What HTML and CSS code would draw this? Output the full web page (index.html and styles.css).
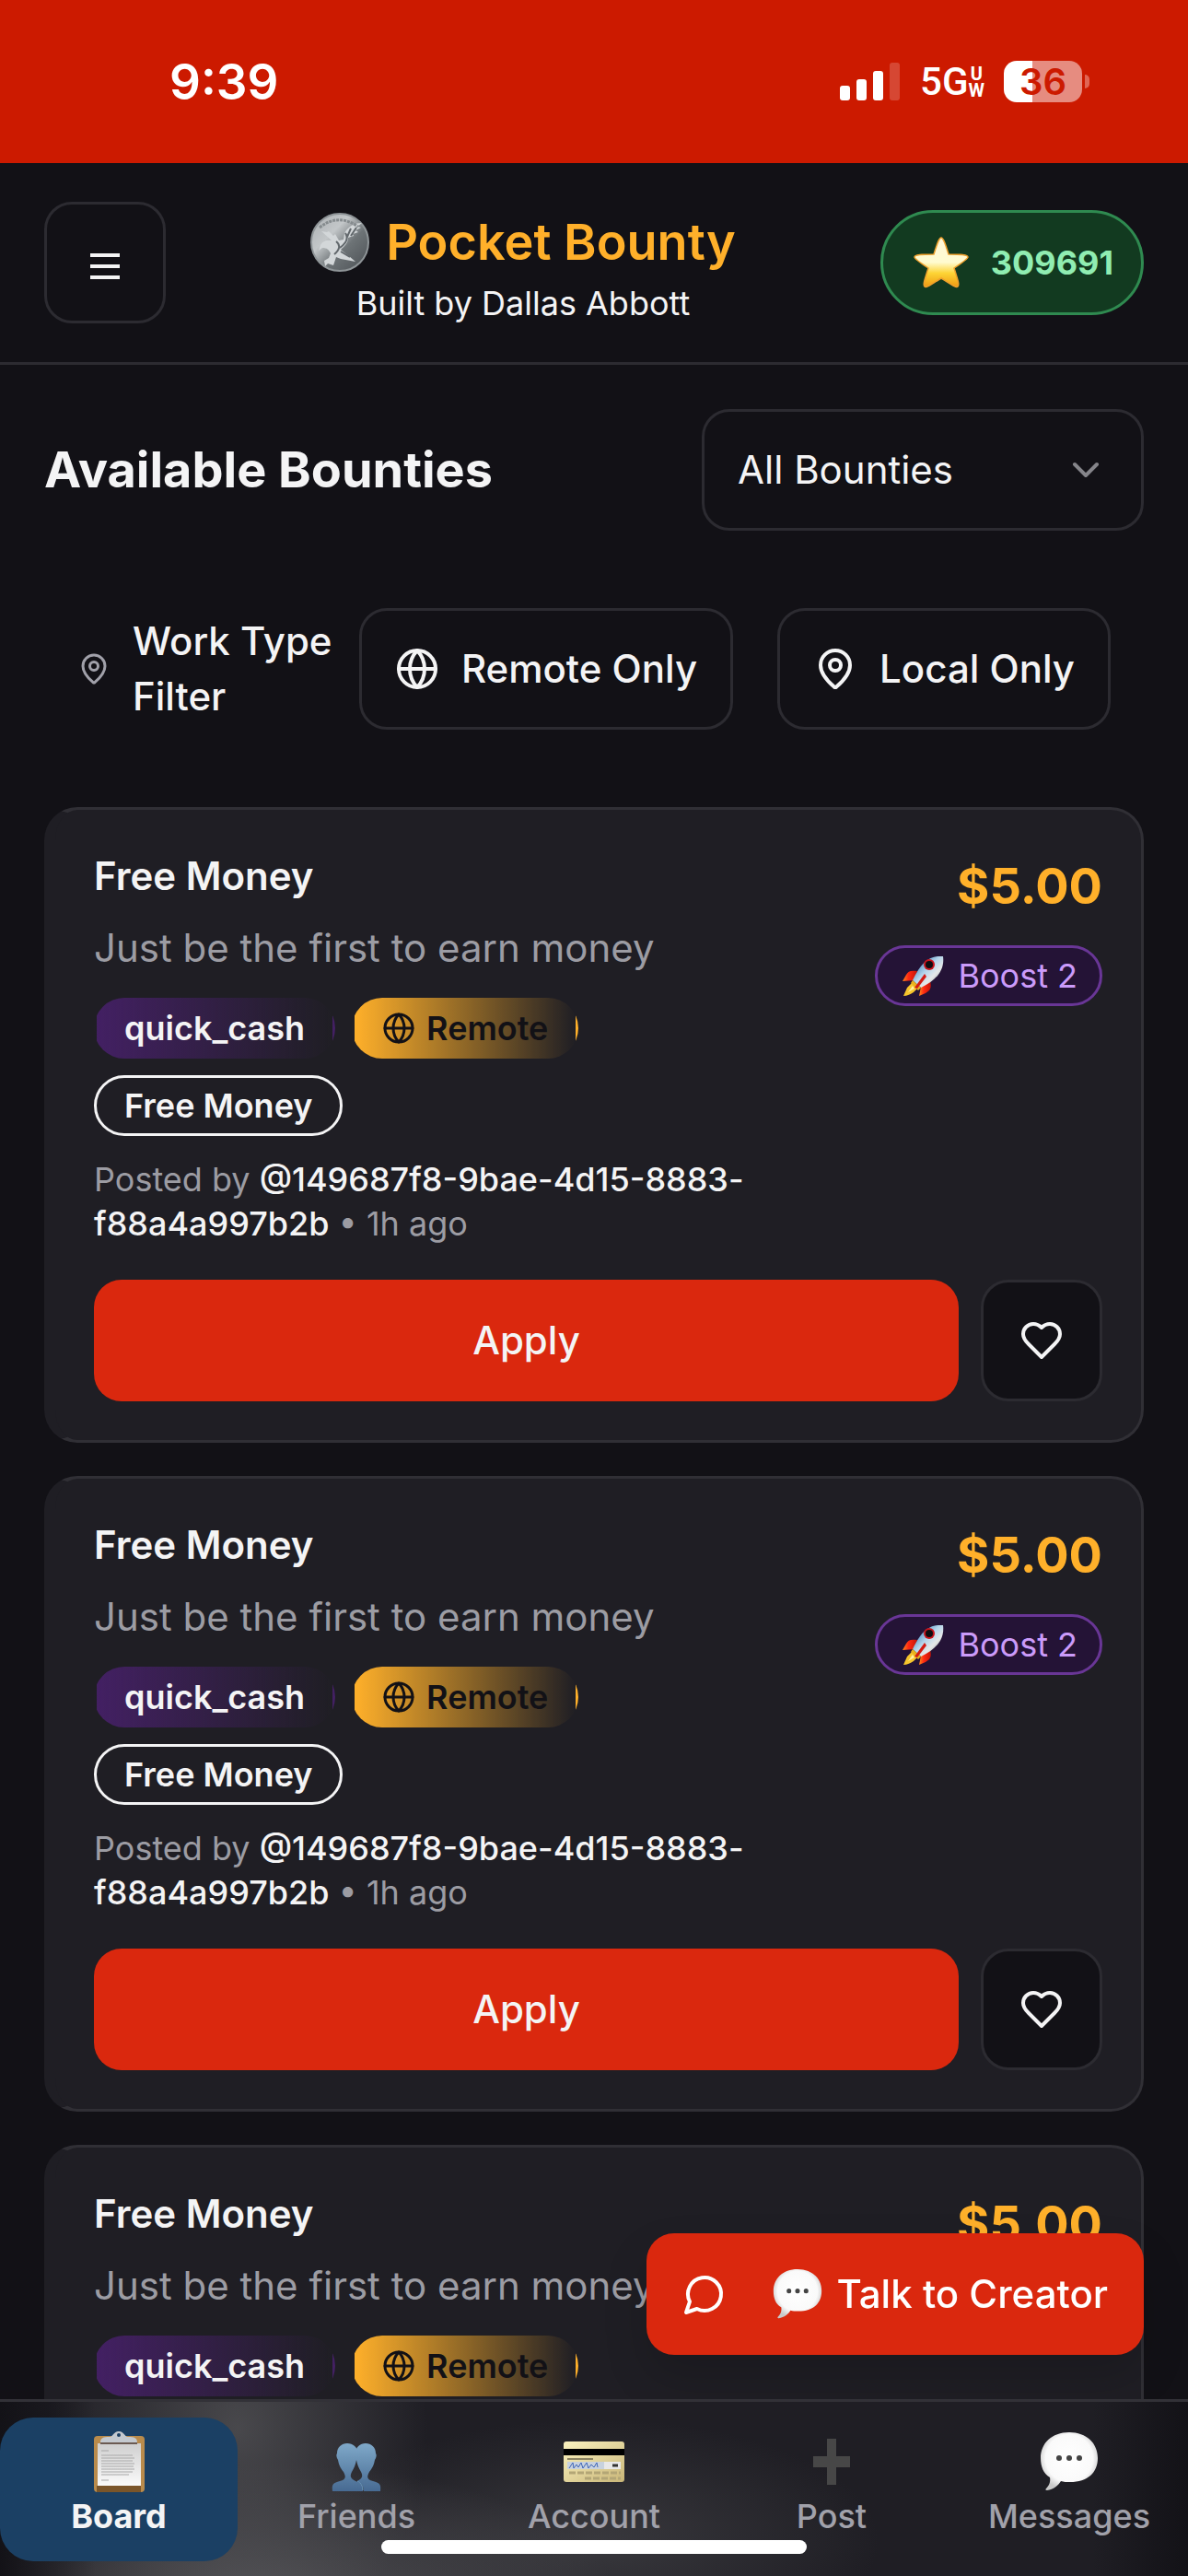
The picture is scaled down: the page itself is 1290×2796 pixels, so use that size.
FILE: index.html
```html
<!DOCTYPE html>
<html lang="en">
<head>
<meta charset="utf-8">
<meta name="viewport" content="width=device-width, initial-scale=1">
<title>Pocket Bounty</title>
<link rel="stylesheet" href="styles.css">
</head>
<body>
<svg class="defs" aria-hidden="true">
  <defs>
    <linearGradient id="g-star" x1="0" y1="0" x2="0" y2="1"><stop offset="0" stop-color="#fff6d8"/><stop offset=".5" stop-color="#fffbd0"/><stop offset=".72" stop-color="#fdd435"/><stop offset="1" stop-color="#ee9a12"/></linearGradient>
    <radialGradient id="g-bubble" cx=".5" cy=".45" r=".55"><stop offset="0" stop-color="#fff"/><stop offset=".75" stop-color="#fafafa"/><stop offset="1" stop-color="#c9c9c9"/></radialGradient>
    <linearGradient id="g-coin" x1="0" y1="0" x2="1" y2="1"><stop offset="0" stop-color="#a9adb0"/><stop offset=".35" stop-color="#c3c7c9"/><stop offset=".6" stop-color="#6d7376"/><stop offset="1" stop-color="#4a4f53"/></linearGradient>
    <linearGradient id="g-people" x1="0" y1="0" x2="0" y2="1"><stop offset="0" stop-color="#7fa9c9"/><stop offset="1" stop-color="#476a92"/></linearGradient>
    <linearGradient id="g-card" x1="0" y1="0" x2="1" y2="1"><stop offset="0" stop-color="#fbf3c0"/><stop offset="1" stop-color="#c9b678"/></linearGradient>
    <linearGradient id="g-paper" x1="0" y1="0" x2="0" y2="1"><stop offset="0" stop-color="#cfcfcf"/><stop offset="1" stop-color="#fafafa"/></linearGradient>
    <linearGradient id="g-rocket" x1="0" y1="0" x2="1" y2="1"><stop offset=".2" stop-color="#4f8fc4"/><stop offset=".45" stop-color="#b4d4ea"/><stop offset=".65" stop-color="#e6e8e8"/><stop offset="1" stop-color="#7d8588"/></linearGradient>
    <linearGradient id="g-fin" x1="0" y1="0" x2="1" y2="0"><stop offset="0" stop-color="#ff8a1c"/><stop offset=".4" stop-color="#ff2a12"/><stop offset="1" stop-color="#c41208"/></linearGradient>
  </defs>
  <symbol id="i-globe" viewBox="0 0 24 24"><circle cx="12" cy="12" r="10"/><path d="M12 2a14.5 14.5 0 0 0 0 20 14.5 14.5 0 0 0 0-20"/><path d="M2 12h20"/></symbol>
  <symbol id="i-pin" viewBox="0 0 24 24"><path d="M20 10c0 4.993-5.539 10.193-7.399 11.799a1 1 0 0 1-1.202 0C9.539 20.193 4 14.993 4 10a8 8 0 0 1 16 0"/><circle cx="12" cy="10" r="3"/></symbol>
  <symbol id="i-heart" viewBox="0 0 24 24"><path d="M19 14c1.490-1.460 3-3.210 3-5.500A5.500 5.500 0 0 0 16.500 3c-1.760 0-3 .500-4.500 2-1.500-1.500-2.740-2-4.500-2A5.500 5.500 0 0 0 2 8.500c0 2.300 1.500 4.050 3 5.500l7 7Z"/></symbol>
  <symbol id="i-chat" viewBox="0 0 24 24"><path d="M7.900 20A9 9 0 1 0 4 16.100L2 22Z"/></symbol>
  <symbol id="i-bubble" viewBox="0 0 64 66"><path d="M32 1C50 1 63 13 63 33c0 20-12 32-31 32-3 0-5 0-8-1-4 1-9 1-16 1Z" fill="none"/><path d="M32 1C51 1 63 13 63 29c0 16-11 26-30 26-4 0-7 0-10-1-3 5-8 9-15 10-2 0-2-1-1-2 3-3 5-7 4-12C4 46 1 38 1 29 1 13 13 1 32 1Z" fill="url(#g-bubble)"/><circle cx="21" cy="29" r="3" fill="#444"/><circle cx="32" cy="29" r="3" fill="#444"/><circle cx="43" cy="29" r="3" fill="#444"/></symbol>
  <symbol id="i-rocket" viewBox="0 0 46 44"><path d="M17 17c-7-1-10 0-12 4L1 28l13-1z" fill="url(#g-fin)"/><path d="M31 28c2 7 0 10-5 13l-7 3 2-10z" fill="url(#g-fin)"/><path d="m11 30-5 5-4 9c4 0 8-2 11-4l5-5z" fill="#f7c52c"/><path d="m12 33-5 7 7-4z" fill="#fff1a0"/><path d="M45 1C31 0 22 6 12 27l9 8C38 27 47 16 45 1Z" fill="url(#g-rocket)"/><circle cx="30" cy="10" r="6" fill="#c8141c"/><circle cx="30" cy="10" r="4" fill="#0d0d10"/><path d="m12 27 9 8-3 3-8-8z" fill="#e8b21e"/><path d="m25 20-11 15 3 1 10-13z" fill="#d31a12"/></symbol>
</svg>

<div class="statusbar">
  <span class="clock">9:39</span>
  <div class="status-icons">
    <svg class="signal" viewBox="0 0 66 42" aria-hidden="true"><rect x="0" y="25" width="11" height="16" rx="3"/><rect x="18" y="18" width="11" height="23" rx="3"/><rect x="36" y="9" width="11" height="32" rx="3"/><rect x="54" y="0" width="11" height="41" rx="3" opacity=".2"/></svg>
    <span class="network">5G<span class="network-sub"><span>U</span><span>W</span></span></span>
    <span class="battery"><span class="battery-body">36</span><span class="battery-cap"></span></span>
  </div>
</div>

<header class="header">
  <button class="menu-btn" aria-label="Menu"><svg viewBox="0 0 32 28"><path d="M0 2h32M0 14h32M0 26h32"/></svg></button>
  <div class="brand">
    <h1 class="brand-title">
      <svg class="coin" viewBox="0 0 64 64" aria-hidden="true"><circle cx="32" cy="32" r="31" fill="url(#g-coin)" stroke="#8f9598" stroke-width="2"/><path d="M11 35c2-4 6-6 12-5l-11-10 6 1 2-1 5 5 2-2 4 7 5-1c1-4 0-6 3-10 4-5 9-8 17-8l-5 4 4 1-6 3 3 2-6 2 1 2-6 2c0 6-4 9-8 13l9 7 7 6-16-3-5-2-3 9-6-2-3 3-1-6 5-3 2-5c-2-4-4-6-9-6l-4 3z" fill="#d3d7d9"/><path d="M28 31c5 4 4 9-2 14M38 22c4 6 1 11-6 16M44 17l-4 9M50 16l-6 9M33 42l10 6" fill="none" stroke="#62686c" stroke-width="2"/><path d="M10 16q20-16 42-1" fill="none" stroke="#858b8e" stroke-width="3" stroke-dasharray="3 1"/></svg>
      Pocket Bounty
    </h1>
    <p class="brand-sub">Built by Dallas Abbott</p>
  </div>
  <button class="points">
    <svg class="star" viewBox="0 0 60 58" aria-hidden="true"><path d="M30 2c2 0 4 5 8 18 13 0 21 0 21 3 0 2-6 6-15 12 4 13 6 18 4 20-2 2-8-3-18-9-10 6-16 11-18 9-2-2 0-7 4-20C7 29 1 25 1 23c0-3 8-3 21-3C26 7 28 2 30 2Z" fill="url(#g-star)" stroke="#efa02c" stroke-width="1.500"/></svg>
    <span>309691</span>
  </button>
</header>

<main class="main">
  <div class="heading-row">
    <h2 class="heading">Available Bounties</h2>
    <div class="select-wrap">
      <select class="select" aria-label="Filter bounties"><option>All Bounties</option></select>
      <svg class="chevron" viewBox="0 0 24 24" aria-hidden="true"><path d="m6 9 6 6 6-6"/></svg>
    </div>
  </div>

  <div class="filters">
    <svg class="icon icon-sm" aria-hidden="true"><use href="#i-pin"/></svg>
    <span class="filters-label">Work Type Filter</span>
    <div class="filters-buttons">
      <button class="btn"><svg class="icon"><use href="#i-globe"/></svg>Remote Only</button>
      <button class="btn"><svg class="icon"><use href="#i-pin"/></svg>Local Only</button>
    </div>
  </div>

  <div class="cards">
    <article class="card">
      <div class="card-top">
        <div class="card-info">
          <h3 class="card-title">Free Money</h3>
          <p class="card-desc">Just be the first to earn money</p>
          <div class="tags">
            <span class="tag tag-purple">quick_cash</span>
            <span class="tag tag-gold"><svg class="icon icon-sm"><use href="#i-globe"/></svg>Remote</span>
            <span class="tag tag-outline">Free Money</span>
          </div>
          <p class="posted">Posted by <b>@149687f8-9bae-4d15-8883-f88a4a997b2b</b> • 1h ago</p>
        </div>
        <div class="card-side">
          <span class="price">$5.00</span>
          <span class="boost"><svg class="rocket"><use href="#i-rocket"/></svg>Boost 2</span>
        </div>
      </div>
      <div class="actions">
        <button class="apply">Apply</button>
        <button class="like" aria-label="Save"><svg class="icon"><use href="#i-heart"/></svg></button>
      </div>
    </article>

    <article class="card">
      <div class="card-top">
        <div class="card-info">
          <h3 class="card-title">Free Money</h3>
          <p class="card-desc">Just be the first to earn money</p>
          <div class="tags">
            <span class="tag tag-purple">quick_cash</span>
            <span class="tag tag-gold"><svg class="icon icon-sm"><use href="#i-globe"/></svg>Remote</span>
            <span class="tag tag-outline">Free Money</span>
          </div>
          <p class="posted">Posted by <b>@149687f8-9bae-4d15-8883-f88a4a997b2b</b> • 1h ago</p>
        </div>
        <div class="card-side">
          <span class="price">$5.00</span>
          <span class="boost"><svg class="rocket"><use href="#i-rocket"/></svg>Boost 2</span>
        </div>
      </div>
      <div class="actions">
        <button class="apply">Apply</button>
        <button class="like" aria-label="Save"><svg class="icon"><use href="#i-heart"/></svg></button>
      </div>
    </article>

    <article class="card card-last">
      <div class="card-top">
        <div class="card-info">
          <h3 class="card-title">Free Money</h3>
          <p class="card-desc">Just be the first to earn money</p>
          <div class="tags">
            <span class="tag tag-purple">quick_cash</span>
            <span class="tag tag-gold"><svg class="icon icon-sm"><use href="#i-globe"/></svg>Remote</span>
          </div>
        </div>
        <div class="card-side">
          <span class="price">$5.00</span>
        </div>
      </div>
    </article>
  </div>
</main>

<button class="fab"><svg class="icon"><use href="#i-chat"/></svg><span class="fab-label"><svg class="fab-bubble"><use href="#i-bubble"/></svg>Talk to Creator</span></button>

<nav class="tabbar">
  <a class="tab tab-active" href="#board">
    <svg class="tab-icon" viewBox="0 0 72 72" aria-hidden="true"><rect x="9" y="8" width="55" height="61" rx="4" fill="#b98b4c"/><path d="M12 62h48v7H12z" fill="#7a552a"/><path d="M13 16h47v46H13z" fill="url(#g-paper)"/><path d="M17 24h8M17 29h34M17 32h36M17 35h34M17 38h36M17 41h35M17 44h36M17 47h34M17 50h30M17 56h8" stroke="#a8a8a8" stroke-width="1"/><path d="M16 15h40v2H16z" fill="#6b5a52"/><path d="M16 15c0-5 3-6 10-6 4 0 4-6 10-6s6 6 10 6c7 0 10 1 10 6z" fill="#c4c9cf"/><circle cx="36" cy="7" r="2" fill="#1c3f63"/></svg>
    <span>Board</span>
  </a>
  <a class="tab" href="#friends">
    <svg class="tab-icon" viewBox="0 0 72 72" aria-hidden="true"><g fill="url(#g-people)"><path d="M10 68c-1-8 1-9 8-11 8-2 6-6 4-10-4-5-5-8-6-13-2-3-2-6-1-7 0-7 5-11 11-11s12 4 11 11c1 1 1 4-1 7-1 5-2 8-5 13-2 4-2 7 4 10 6 2 8 4 8 11z"/><path d="M62 68c1-8-1-9-8-11-8-2-6-6-4-10 4-5 5-8 6-13 2-3 2-6 1-7 0-7-5-11-11-11s-11 4-11 11c-1 1 0 4 1 7 1 5 2 8 5 13 2 4 2 7-4 10 4 2 7 5 7 11z"/></g><path d="M37 57c4 2 6 5 6 10" fill="none" stroke="#6e9cc2" stroke-width="1"/></svg>
    <span>Friends</span>
  </a>
  <a class="tab" href="#account">
    <svg class="tab-icon" viewBox="0 0 72 72" aria-hidden="true"><rect x="3" y="14" width="66" height="44" rx="3" fill="url(#g-card)"/><path d="M3 22h66v7H3z" fill="#000"/><path d="M7 33h28" stroke="#8a8260" stroke-width="2"/><path d="M7 36h40v8H7z" fill="#c8d2de"/><path d="M47 36h18v8H47z" fill="#e8e8e8"/><path d="m9 43 4-6 1 6 3-4 2 3 3-5 2 6 4-6 2 6 3-4 3 3 3-5 1 5" fill="none" stroke="#3f66b8" stroke-width="1"/><path d="M56 40h6" stroke="#333" stroke-width="3"/><path d="M9 48h56M26 54h39" stroke="#b3a676" stroke-width="3" stroke-dasharray="7 2"/></svg>
    <span>Account</span>
  </a>
  <a class="tab" href="#post">
    <svg class="tab-icon" viewBox="0 0 72 72" aria-hidden="true"><path d="M31 11h10v19h15v12H41v19H31V42H16V30h15z" fill="#474747"/></svg>
    <span>Post</span>
  </a>
  <a class="tab" href="#messages">
    <svg class="tab-icon" viewBox="-4 -3 72 72" aria-hidden="true"><use href="#i-bubble" width="64" height="66"/></svg>
    <span>Messages</span>
  </a>
  <div class="home-indicator"></div>
</nav>
</body>
</html>
```
FILE: styles.css
```css
* { box-sizing: border-box; }

html, body { height: 100%; }

body {
  margin: 0;
  display: flex;
  flex-direction: column;
  overflow: hidden;
  background: #121116;
  color: #f4f4f5;
  font-family: Inter, "Liberation Sans", sans-serif;
  font-size: 42px;
  line-height: 60px;
}

h1, h2, h3, p { margin: 0; }

button {
  font: inherit;
  color: inherit;
  margin: 0;
  cursor: pointer;
}

svg { display: block; flex: none; }

.defs { position: absolute; width: 0; height: 0; }

.icon {
  width: 48px;
  height: 48px;
  fill: none;
  stroke: currentColor;
  stroke-width: 2;
  stroke-linecap: round;
  stroke-linejoin: round;
}

.icon-sm { width: 36px; height: 36px; }

/* Status bar */
.statusbar {
  flex: none;
  height: 177px;
  padding: 0 107px 0 184px;
  display: flex;
  align-items: center;
  justify-content: space-between;
  background: #cc1a00;
  color: #fff;
}

.clock { font-size: 53px; font-weight: 600; }

.status-icons { display: flex; align-items: center; gap: 21px; }

.signal { width: 66px; height: 42px; fill: #fff; }

.network {
  display: flex;
  align-items: center;
  font-family: Roboto, Inter, sans-serif;
  font-size: 42px;
  font-weight: 500;
}

.network-sub {
  display: flex;
  flex-direction: column;
  align-items: center;
  font-size: 20px;
  font-weight: 700;
  line-height: 18px;
}

.battery { display: flex; align-items: center; gap: 3px; }

.battery-body {
  width: 85px;
  height: 45px;
  border-radius: 14px;
  background: linear-gradient(to right, #fff 36%, #e68c80 36%);
  color: #cc1a00;
  font-size: 40px;
  font-weight: 600;
  line-height: 45px;
  text-align: center;
}

.battery-cap {
  width: 5px;
  height: 15px;
  border-radius: 0 5px 5px 0;
  background: #e06655;
}

/* Header */
.header {
  flex: none;
  padding: 42px 48px;
  display: flex;
  align-items: center;
  justify-content: space-between;
  border-bottom: 3px solid #2c2b31;
}

.menu-btn {
  width: 132px;
  height: 132px;
  padding: 8px 0 0;
  display: grid;
  place-items: center;
  border: 3px solid #2c2b31;
  border-radius: 30px;
  background: none;
}

.menu-btn svg { width: 32px; height: 28px; stroke: #f4f4f5; stroke-width: 4; }

.brand {
  padding-top: 12px;
  display: flex;
  flex-direction: column;
  align-items: center;
  gap: 12px;
}

.brand-title {
  display: flex;
  align-items: center;
  gap: 18px;
  color: #ffb02a;
  font-size: 54px;
  font-weight: 600;
  line-height: 64px;
}

.coin { width: 64px; height: 64px; }

.brand-sub { font-size: 36px; line-height: 44px; }

.points {
  height: 114px;
  padding: 0 30px 0 33px;
  display: flex;
  align-items: center;
  gap: 24px;
  border: 3px solid #2f8a50;
  border-radius: 57px;
  background: #123a20;
  color: #90edb2;
  font-size: 36px;
  font-weight: 700;
}

.star { width: 60px; height: 58px; }

/* Page heading */
.main {
  flex: 1;
  min-height: 0;
  padding: 48px;
  overflow: hidden;
}

.heading-row { display: flex; align-items: center; justify-content: space-between; }

.heading { font-size: 54px; font-weight: 700; }

.select-wrap { display: grid; width: 480px; align-items: center; }

.select {
  grid-area: 1 / 1;
  height: 132px;
  padding: 0 36px;
  appearance: none;
  border: 3px solid #2c2b31;
  border-radius: 30px;
  background: none;
  color: inherit;
  font: inherit;
}

.chevron {
  grid-area: 1 / 1;
  justify-self: end;
  width: 48px;
  height: 48px;
  margin-right: 39px;
  fill: none;
  stroke: #85858a;
  stroke-width: 2;
  stroke-linecap: round;
  stroke-linejoin: round;
  pointer-events: none;
}

/* Work type filter */
.filters {
  margin-top: 48px;
  padding: 36px;
  display: flex;
  align-items: center;
  gap: 24px;
  font-weight: 500;
}

.filters > .icon { color: #a1a1aa; }

.filters-label { flex: 1; }

.filters-buttons { display: flex; gap: 48px; }

.btn {
  height: 132px;
  padding: 0 36px;
  display: flex;
  align-items: center;
  gap: 24px;
  border: 3px solid #2c2b31;
  border-radius: 30px;
  background: none;
  font-weight: 500;
  white-space: nowrap;
}

/* Bounty cards */
.cards {
  margin-top: 48px;
  display: flex;
  flex-direction: column;
  gap: 36px;
}

.card {
  padding: 42px;
  border: 3px solid #302f35;
  border-left: 12px solid #1f1e24;
  border-radius: 36px;
  background: #1f1e24;
}

/* Runs on under the tab bar */
.card-last { padding-bottom: 200px; }

.card-top { display: flex; justify-content: space-between; gap: 48px; }

.card-info { flex: 1; max-width: 720px; }

.card-title { font-size: 42px; font-weight: 600; }

.card-desc { margin-top: 18px; color: #9c9ca3; }

.tags {
  margin-top: 24px;
  padding-right: 96px;
  display: flex;
  flex-wrap: wrap;
  gap: 18px;
}

.tag {
  height: 66px;
  padding: 0 30px;
  display: flex;
  align-items: center;
  gap: 12px;
  border: 3px solid transparent;
  border-radius: 33px;
  font-size: 36px;
  font-weight: 600;
}

.tag-purple { background-image: linear-gradient(to right, #432063, transparent); }

.tag-gold {
  background-image: linear-gradient(to right, #ffb02a, transparent);
  color: #121116;
}

.tag-outline { border-color: #f4f4f5; }

.posted {
  margin-top: 23px;
  margin-bottom: 1px;
  color: #9c9ca3;
  font-size: 36px;
  line-height: 48px;
}

.posted b { color: #f4f4f5; font-weight: 500; }

.card-side {
  display: flex;
  flex-direction: column;
  align-items: flex-end;
  gap: 24px;
}

.price {
  color: #ffb02a;
  font-size: 54px;
  font-weight: 700;
  line-height: 81px;
}

.boost {
  height: 66px;
  padding: 0 24px 0 26px;
  display: flex;
  align-items: center;
  gap: 15px;
  border: 3px solid #693696;
  border-radius: 33px;
  background: #241336;
  color: #cb9bfa;
  font-size: 36px;
  white-space: nowrap;
}

.rocket { width: 46px; height: 44px; }

.actions { margin-top: 36px; display: flex; gap: 24px; }

.apply {
  flex: 1;
  height: 132px;
  border: 0;
  border-radius: 30px;
  background: #da280e;
  font-weight: 500;
}

.like {
  width: 132px;
  height: 132px;
  padding: 0;
  display: grid;
  place-items: center;
  border: 3px solid #2c2b31;
  border-radius: 30px;
  background: #121116;
}

/* Floating contact button */
.fab {
  position: fixed;
  right: 48px;
  bottom: 240px;
  height: 132px;
  padding: 0 39px;
  display: flex;
  align-items: center;
  gap: 50px;
  border: 0;
  border-radius: 30px;
  background: #da280e;
  color: #fff;
  font-weight: 500;
  white-space: nowrap;
  box-shadow: 0 24px 48px rgba(0, 0, 0, 0.15);
}

.fab-label { display: flex; align-items: center; gap: 15px; }

.fab-bubble { width: 54px; height: 60px; }

/* Bottom tab bar */
.tabbar {
  position: fixed;
  left: 0;
  right: 0;
  bottom: 0;
  padding: 17px 0 16px;
  display: flex;
  border-top: 3px solid #323137;
  background:
    linear-gradient(to right, #131217, transparent 8%, transparent 92%, #131217),
    radial-gradient(ellipse 30% 80% at 22% 115%, rgba(96, 96, 99, 0.8), transparent),
    radial-gradient(ellipse 16% 130% at 20% 15%, rgba(90, 90, 93, 0.7), transparent),
    radial-gradient(ellipse 24% 70% at 50% 80%, rgba(74, 74, 78, 0.6), transparent),
    #1f1e24;
}

.tab {
  flex: 1;
  height: 156px;
  padding-top: 12px;
  display: flex;
  flex-direction: column;
  align-items: center;
  border-radius: 36px;
  color: #a1a1aa;
  font-size: 36px;
  font-weight: 500;
  line-height: 46px;
  text-decoration: none;
}

.tab-active { background: #1b4064; color: #f4f4f5; font-weight: 700; }

.tab-icon { width: 72px; height: 72px; }

.home-indicator {
  position: absolute;
  left: 50%;
  bottom: 24px;
  width: 462px;
  height: 15px;
  margin-left: -231px;
  border-radius: 8px;
  background: #fff;
}
```
